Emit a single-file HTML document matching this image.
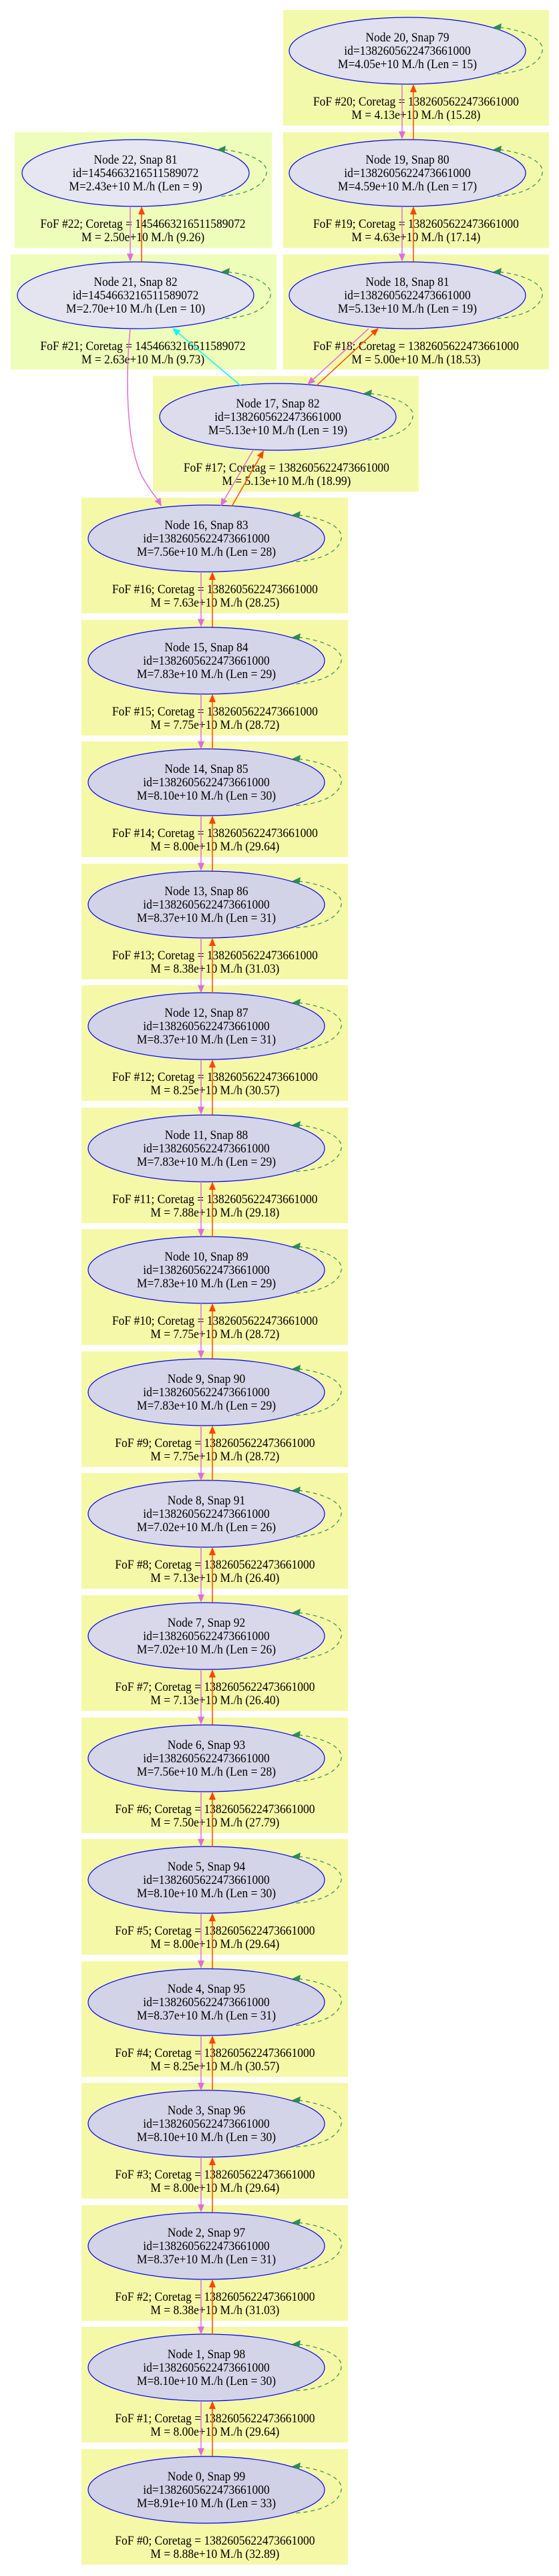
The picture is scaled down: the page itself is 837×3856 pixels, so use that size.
<!DOCTYPE html>
<html><head><meta charset="utf-8"><style>
html,body{margin:0;padding:0;background:#fff;}
svg{display:block;}
text{font-family:"Liberation Serif","DejaVu Serif",serif;font-size:19px;text-anchor:middle;fill:#000;}
</style></head><body>
<svg width="837" height="3856" viewBox="0 0 837 3856" xmlns="http://www.w3.org/2000/svg">
<defs>
<g id="loop">
<path d="M138,-35 C180,-30 205,-15 202,0 C200,15 180,33 128,35" fill="none" stroke="#2e8b57" stroke-width="1.2" stroke-dasharray="6,5"/>
<polygon points="128,-35 141,-41 139,-30" fill="#2e8b57"/>
</g>
<g id="ch">
<path d="M-8,50 V121" stroke="#da70d6" stroke-width="1.5"/>
<polygon points="-8,132.6 -13,120.6 -3,120.6" fill="#da70d6"/>
<path d="M9,132.6 V62" stroke="#ff4500" stroke-width="1.5"/>
<polygon points="9,50 4,62 14,62" fill="#ff4500"/>
</g>
</defs>

<!-- clusters & nodes -->
<!-- Node 20 -->
<g transform="translate(610,76)">
<rect x="-186" y="-61" width="398" height="173" fill="#f3f9ab"/>
<ellipse rx="177" ry="50" fill="#e0e0ee" stroke="#0000ff" stroke-width="1.2"/>
<use href="#loop"/>
<g transform="scale(.92,1)"><text y="-14">Node 20, Snap 79</text><text y="6">id=1382605622473661000</text><text y="26">M=4.05e+10 M./h (Len = 15)</text><text x="14" y="82">FoF #20; Coretag = 1382605622473661000</text><text x="14" y="102">M = 4.13e+10 M./h (15.28)</text></g>
</g>
<!-- Node 19 -->
<g transform="translate(610,259)">
<rect x="-186" y="-61" width="398" height="173" fill="#f3f9ab"/>
<ellipse rx="177" ry="50" fill="#dedeed" stroke="#0000ff" stroke-width="1.2"/>
<use href="#loop"/>
<g transform="scale(.92,1)"><text y="-14">Node 19, Snap 80</text><text y="6">id=1382605622473661000</text><text y="26">M=4.59e+10 M./h (Len = 17)</text><text x="14" y="82">FoF #19; Coretag = 1382605622473661000</text><text x="14" y="102">M = 4.63e+10 M./h (17.14)</text></g>
</g>
<!-- Node 18 -->
<g transform="translate(610,442)">
<rect x="-186" y="-61" width="398" height="172" fill="#f3f9ab"/>
<ellipse rx="177" ry="50" fill="#dcdcec" stroke="#0000ff" stroke-width="1.2"/>
<use href="#loop"/>
<g transform="scale(.92,1)"><text y="-14">Node 18, Snap 81</text><text y="6">id=1382605622473661000</text><text y="26">M=5.13e+10 M./h (Len = 19)</text><text x="14" y="82">FoF #18; Coretag = 1382605622473661000</text><text x="14" y="102">M = 5.00e+10 M./h (18.53)</text></g>
</g>
<!-- Node 22 -->
<g transform="translate(203,259)">
<rect x="-181" y="-61" width="385" height="173" fill="#eefdb9"/>
<ellipse rx="170" ry="50" fill="#e6e6f2" stroke="#0000ff" stroke-width="1.2"/>
<use href="#loop" transform="translate(-6,0)"/>
<g transform="scale(.92,1)"><text y="-14">Node 22, Snap 81</text><text y="6">id=1454663216511589072</text><text y="26">M=2.43e+10 M./h (Len = 9)</text><text x="12" y="82">FoF #22; Coretag = 1454663216511589072</text><text x="12" y="102">M = 2.50e+10 M./h (9.26)</text></g>
</g>
<!-- Node 21 -->
<g transform="translate(203,442)">
<rect x="-187" y="-61" width="398" height="172" fill="#eefdb9"/>
<ellipse rx="177" ry="50" fill="#e4e4f1" stroke="#0000ff" stroke-width="1.2"/>
<use href="#loop"/>
<g transform="scale(.92,1)"><text y="-14">Node 21, Snap 82</text><text y="6">id=1454663216511589072</text><text y="26">M=2.70e+10 M./h (Len = 10)</text><text x="12" y="82">FoF #21; Coretag = 1454663216511589072</text><text x="12" y="102">M = 2.63e+10 M./h (9.73)</text></g>
</g>
<!-- Node 17 -->
<g transform="translate(416,624)">
<rect x="-187" y="-61" width="398" height="173" fill="#f3f9ab"/>
<ellipse rx="177" ry="50" fill="#dcdcec" stroke="#0000ff" stroke-width="1.2"/>
<use href="#loop"/>
<g transform="scale(.92,1)"><text y="-14">Node 17, Snap 82</text><text y="6">id=1382605622473661000</text><text y="26">M=5.13e+10 M./h (Len = 19)</text><text x="14" y="82">FoF #17; Coretag = 1382605622473661000</text><text x="14" y="102">M = 5.13e+10 M./h (18.99)</text></g>
</g>

<!-- main chain -->
<g transform="translate(309,806)"><rect x="-187" y="-61" width="399" height="173" fill="#f5f8a6"/><ellipse rx="177" ry="50" fill="#d6d6e9" stroke="#0000ff" stroke-width="1.2"/><use href="#loop"/><g transform="scale(.92,1)"><text y="-14">Node 16, Snap 83</text><text y="6">id=1382605622473661000</text><text y="26">M=7.56e+10 M./h (Len = 28)</text><text x="14" y="82">FoF #16; Coretag = 1382605622473661000</text><text x="14" y="102">M = 7.63e+10 M./h (28.25)</text></g></g>
<g transform="translate(309,989)"><rect x="-187" y="-61" width="399" height="173" fill="#f5f8a6"/><ellipse rx="177" ry="50" fill="#d5d5e9" stroke="#0000ff" stroke-width="1.2"/><use href="#loop"/><g transform="scale(.92,1)"><text y="-14">Node 15, Snap 84</text><text y="6">id=1382605622473661000</text><text y="26">M=7.83e+10 M./h (Len = 29)</text><text x="14" y="82">FoF #15; Coretag = 1382605622473661000</text><text x="14" y="102">M = 7.75e+10 M./h (28.72)</text></g></g>
<g transform="translate(309,1171)"><rect x="-187" y="-61" width="399" height="173" fill="#f5f8a6"/><ellipse rx="177" ry="50" fill="#d4d4e8" stroke="#0000ff" stroke-width="1.2"/><use href="#loop"/><g transform="scale(.92,1)"><text y="-14">Node 14, Snap 85</text><text y="6">id=1382605622473661000</text><text y="26">M=8.10e+10 M./h (Len = 30)</text><text x="14" y="82">FoF #14; Coretag = 1382605622473661000</text><text x="14" y="102">M = 8.00e+10 M./h (29.64)</text></g></g>
<g transform="translate(309,1354)"><rect x="-187" y="-61" width="399" height="173" fill="#f5f8a6"/><ellipse rx="177" ry="50" fill="#d3d3e7" stroke="#0000ff" stroke-width="1.2"/><use href="#loop"/><g transform="scale(.92,1)"><text y="-14">Node 13, Snap 86</text><text y="6">id=1382605622473661000</text><text y="26">M=8.37e+10 M./h (Len = 31)</text><text x="14" y="82">FoF #13; Coretag = 1382605622473661000</text><text x="14" y="102">M = 8.38e+10 M./h (31.03)</text></g></g>
<g transform="translate(309,1536)"><rect x="-187" y="-61" width="399" height="173" fill="#f5f8a6"/><ellipse rx="177" ry="50" fill="#d3d3e7" stroke="#0000ff" stroke-width="1.2"/><use href="#loop"/><g transform="scale(.92,1)"><text y="-14">Node 12, Snap 87</text><text y="6">id=1382605622473661000</text><text y="26">M=8.37e+10 M./h (Len = 31)</text><text x="14" y="82">FoF #12; Coretag = 1382605622473661000</text><text x="14" y="102">M = 8.25e+10 M./h (30.57)</text></g></g>
<g transform="translate(309,1719)"><rect x="-187" y="-61" width="399" height="173" fill="#f5f8a6"/><ellipse rx="177" ry="50" fill="#d5d5e9" stroke="#0000ff" stroke-width="1.2"/><use href="#loop"/><g transform="scale(.92,1)"><text y="-14">Node 11, Snap 88</text><text y="6">id=1382605622473661000</text><text y="26">M=7.83e+10 M./h (Len = 29)</text><text x="14" y="82">FoF #11; Coretag = 1382605622473661000</text><text x="14" y="102">M = 7.88e+10 M./h (29.18)</text></g></g>
<g transform="translate(309,1901)"><rect x="-187" y="-61" width="399" height="173" fill="#f5f8a6"/><ellipse rx="177" ry="50" fill="#d5d5e9" stroke="#0000ff" stroke-width="1.2"/><use href="#loop"/><g transform="scale(.92,1)"><text y="-14">Node 10, Snap 89</text><text y="6">id=1382605622473661000</text><text y="26">M=7.83e+10 M./h (Len = 29)</text><text x="14" y="82">FoF #10; Coretag = 1382605622473661000</text><text x="14" y="102">M = 7.75e+10 M./h (28.72)</text></g></g>
<g transform="translate(309,2084)"><rect x="-187" y="-61" width="399" height="173" fill="#f5f8a6"/><ellipse rx="177" ry="50" fill="#d5d5e9" stroke="#0000ff" stroke-width="1.2"/><use href="#loop"/><g transform="scale(.92,1)"><text y="-14">Node 9, Snap 90</text><text y="6">id=1382605622473661000</text><text y="26">M=7.83e+10 M./h (Len = 29)</text><text x="14" y="82">FoF #9; Coretag = 1382605622473661000</text><text x="14" y="102">M = 7.75e+10 M./h (28.72)</text></g></g>
<g transform="translate(309,2266)"><rect x="-187" y="-61" width="399" height="173" fill="#f5f8a6"/><ellipse rx="177" ry="50" fill="#d8d8ea" stroke="#0000ff" stroke-width="1.2"/><use href="#loop"/><g transform="scale(.92,1)"><text y="-14">Node 8, Snap 91</text><text y="6">id=1382605622473661000</text><text y="26">M=7.02e+10 M./h (Len = 26)</text><text x="14" y="82">FoF #8; Coretag = 1382605622473661000</text><text x="14" y="102">M = 7.13e+10 M./h (26.40)</text></g></g>
<g transform="translate(309,2449)"><rect x="-187" y="-61" width="399" height="173" fill="#f5f8a6"/><ellipse rx="177" ry="50" fill="#d8d8ea" stroke="#0000ff" stroke-width="1.2"/><use href="#loop"/><g transform="scale(.92,1)"><text y="-14">Node 7, Snap 92</text><text y="6">id=1382605622473661000</text><text y="26">M=7.02e+10 M./h (Len = 26)</text><text x="14" y="82">FoF #7; Coretag = 1382605622473661000</text><text x="14" y="102">M = 7.13e+10 M./h (26.40)</text></g></g>
<g transform="translate(309,2632)"><rect x="-187" y="-61" width="399" height="173" fill="#f5f8a6"/><ellipse rx="177" ry="50" fill="#d6d6e9" stroke="#0000ff" stroke-width="1.2"/><use href="#loop"/><g transform="scale(.92,1)"><text y="-14">Node 6, Snap 93</text><text y="6">id=1382605622473661000</text><text y="26">M=7.56e+10 M./h (Len = 28)</text><text x="14" y="82">FoF #6; Coretag = 1382605622473661000</text><text x="14" y="102">M = 7.50e+10 M./h (27.79)</text></g></g>
<g transform="translate(309,2814)"><rect x="-187" y="-61" width="399" height="173" fill="#f5f8a6"/><ellipse rx="177" ry="50" fill="#d4d4e8" stroke="#0000ff" stroke-width="1.2"/><use href="#loop"/><g transform="scale(.92,1)"><text y="-14">Node 5, Snap 94</text><text y="6">id=1382605622473661000</text><text y="26">M=8.10e+10 M./h (Len = 30)</text><text x="14" y="82">FoF #5; Coretag = 1382605622473661000</text><text x="14" y="102">M = 8.00e+10 M./h (29.64)</text></g></g>
<g transform="translate(309,2997)"><rect x="-187" y="-61" width="399" height="173" fill="#f5f8a6"/><ellipse rx="177" ry="50" fill="#d3d3e7" stroke="#0000ff" stroke-width="1.2"/><use href="#loop"/><g transform="scale(.92,1)"><text y="-14">Node 4, Snap 95</text><text y="6">id=1382605622473661000</text><text y="26">M=8.37e+10 M./h (Len = 31)</text><text x="14" y="82">FoF #4; Coretag = 1382605622473661000</text><text x="14" y="102">M = 8.25e+10 M./h (30.57)</text></g></g>
<g transform="translate(309,3179)"><rect x="-187" y="-61" width="399" height="173" fill="#f5f8a6"/><ellipse rx="177" ry="50" fill="#d4d4e8" stroke="#0000ff" stroke-width="1.2"/><use href="#loop"/><g transform="scale(.92,1)"><text y="-14">Node 3, Snap 96</text><text y="6">id=1382605622473661000</text><text y="26">M=8.10e+10 M./h (Len = 30)</text><text x="14" y="82">FoF #3; Coretag = 1382605622473661000</text><text x="14" y="102">M = 8.00e+10 M./h (29.64)</text></g></g>
<g transform="translate(309,3362)"><rect x="-187" y="-61" width="399" height="173" fill="#f5f8a6"/><ellipse rx="177" ry="50" fill="#d3d3e7" stroke="#0000ff" stroke-width="1.2"/><use href="#loop"/><g transform="scale(.92,1)"><text y="-14">Node 2, Snap 97</text><text y="6">id=1382605622473661000</text><text y="26">M=8.37e+10 M./h (Len = 31)</text><text x="14" y="82">FoF #2; Coretag = 1382605622473661000</text><text x="14" y="102">M = 8.38e+10 M./h (31.03)</text></g></g>
<g transform="translate(309,3544)"><rect x="-187" y="-61" width="399" height="173" fill="#f5f8a6"/><ellipse rx="177" ry="50" fill="#d4d4e8" stroke="#0000ff" stroke-width="1.2"/><use href="#loop"/><g transform="scale(.92,1)"><text y="-14">Node 1, Snap 98</text><text y="6">id=1382605622473661000</text><text y="26">M=8.10e+10 M./h (Len = 30)</text><text x="14" y="82">FoF #1; Coretag = 1382605622473661000</text><text x="14" y="102">M = 8.00e+10 M./h (29.64)</text></g></g>
<g transform="translate(309,3727)"><rect x="-187" y="-61" width="399" height="173" fill="#f5f8a6"/><ellipse rx="177" ry="50" fill="#d0d0e6" stroke="#0000ff" stroke-width="1.2"/><use href="#loop"/><g transform="scale(.92,1)"><text y="-14">Node 0, Snap 99</text><text y="6">id=1382605622473661000</text><text y="26">M=8.91e+10 M./h (Len = 33)</text><text x="14" y="82">FoF #0; Coretag = 1382605622473661000</text><text x="14" y="102">M = 8.88e+10 M./h (32.89)</text></g></g>

<!-- vertical chain edges -->
<use href="#ch" transform="translate(610,76)"/>
<use href="#ch" transform="translate(610,259)"/>
<use href="#ch" transform="translate(203,259)"/>
<use href="#ch" transform="translate(309,806)"/>
<use href="#ch" transform="translate(309,989)"/>
<use href="#ch" transform="translate(309,1171)"/>
<use href="#ch" transform="translate(309,1354)"/>
<use href="#ch" transform="translate(309,1536)"/>
<use href="#ch" transform="translate(309,1719)"/>
<use href="#ch" transform="translate(309,1901)"/>
<use href="#ch" transform="translate(309,2084)"/>
<use href="#ch" transform="translate(309,2266)"/>
<use href="#ch" transform="translate(309,2449)"/>
<use href="#ch" transform="translate(309,2632)"/>
<use href="#ch" transform="translate(309,2814)"/>
<use href="#ch" transform="translate(309,2997)"/>
<use href="#ch" transform="translate(309,3179)"/>
<use href="#ch" transform="translate(309,3362)"/>
<use href="#ch" transform="translate(309,3544)"/>

<!-- cross edges -->
<path d="M552,492 L468.9,567.9" stroke="#da70d6" stroke-width="1.5" fill="none"/>
<polygon points="460,576 472.2,571.6 465.5,564.2" fill="#da70d6"/>
<path d="M474,577 L558.2,499.2" stroke="#ff4500" stroke-width="1.5" fill="none"/>
<polygon points="567,491 561.6,502.9 554.8,495.5" fill="#ff4500"/>
<path d="M379,674 L336,747.6" stroke="#da70d6" stroke-width="1.5" fill="none"/>
<polygon points="330,758 340.4,750.1 331.7,745.1" fill="#da70d6"/>
<path d="M347,758 L389,684.4" stroke="#ff4500" stroke-width="1.5" fill="none"/>
<polygon points="395,674 393.4,686.9 384.7,681.9" fill="#ff4500"/>
<path d="M360,577 L267.2,498.7" stroke="#00ffff" stroke-width="1.5" fill="none"/>
<polygon points="258,491 270.4,494.9 264,502.6" fill="#00ffff"/>
<path d="M195,492 C188,560 188,660 212,712 C222,730 230,740 236,747.6" stroke="#da70d6" stroke-width="1.5" fill="none"/>
<polygon points="242,758 240.3,745.1 231.7,750.1" fill="#da70d6"/>
</svg>
</body></html>
